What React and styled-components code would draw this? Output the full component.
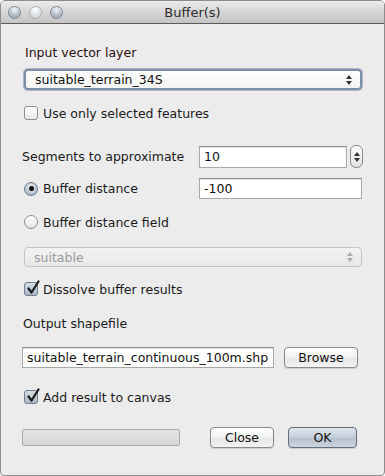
import React from 'react';
import styled, { createGlobalStyle, css } from 'styled-components';

const Global = createGlobalStyle`
  html, body { margin:0; padding:0; background:#ffffff; }
  * { box-sizing:border-box; }
  body { font-family:"DejaVu Sans", "Liberation Sans", sans-serif; font-size:12px; color:#111; }
`

const Window = styled.div`
  width:385px;
  height:476px;
  border:1px solid #8c8c8c;
  border-radius:5px 5px 4px 4px;
  background:#ececec;
  display:flex;
  flex-direction:column;
  overflow:hidden;
`
const TitleBar = styled.div`
  height:23px;
  flex:none;
  display:flex;
  align-items:center;
  position:relative;
  background:linear-gradient(#ebebeb, #d2d2d2 60%, #c4c4c4);
  border-bottom:1px solid #5a5a5a;
  padding-left:7px;
  gap:8px;
`
const Light = styled.span`
  width:13px;
  height:13px;
  border-radius:50%;
  border:1px solid #7d8894;
  background:radial-gradient(circle at 50% 30%, #f2f5f8 0%, #b9c3cd 45%, #8f9ba7 100%);
  box-shadow:inset 0 1px 1px rgba(255,255,255,0.7);
  ${p => p.$faded && css`
    border-color:#a9afb5;
    background:radial-gradient(circle at 50% 30%, #ffffff 0%, #dfe3e7 50%, #c3c9cf 100%);
  `}
`
const Title = styled.div`
  position:absolute;
  left:0;
  right:0;
  top:0;
  line-height:23px;
  text-align:center;
  font-size:13px;
  color:#2b2b2b;
  pointer-events:none;
`
const Content = styled.div`
  display:flex;
  flex-direction:column;
  padding:0 22px 0 21px;
`
const Row = styled.div`
  display:flex;
  align-items:center;
  height:${p => p.$h}px;
  margin-top:${p => p.$mt}px;
  padding-left:${p => p.$pl || 0}px;
`
const Label = styled.span`
  font-size:12.5px;
  color:#1a1a1a;
  white-space:nowrap;
`
const SelectBox = styled.div`
  flex:1;
  height:100%;
  display:flex;
  align-items:center;
  justify-content:space-between;
  padding:0 8px 0 9px;
  border-radius:4px;
  font-size:12.5px;
  background:linear-gradient(#ffffff, #f4f4f4);
  border:1px solid #9a9a9a;
  box-shadow:0 1px 1px rgba(0,0,0,0.12);
  ${p => p.$focus && css`
    border:2px solid #7c8ea3;
    box-shadow:0 0 0 1px #a9b7c8;
  `}
  ${p => p.$disabled && css`
    color:#9a9a9a;
    background:linear-gradient(#f2f2f2, #e9e9e9);
    border-color:#c4c4c4;
    box-shadow:none;
  `}
`
const Arrows = styled.span`
  display:flex;
  flex-direction:column;
  gap:2px;
  &::before, &::after {
    content:'';
    border-left:3px solid transparent;
    border-right:3px solid transparent;
  }
  &::before { border-bottom:4px solid ${p => p.$color}; }
  &::after { border-top:4px solid ${p => p.$color}; }
`
const Check = styled.span`
  width:14px;
  height:14px;
  flex:none;
  border:1px solid #8e8e8e;
  border-radius:3px;
  background:linear-gradient(#ffffff, #e6e6e6);
  margin-right:5px;
  position:relative;
  ${p => p.$checked && css`
    border-color:#6f7d8c;
    background:linear-gradient(#d5dde6, #aab7c6);
  `}
  svg { position:absolute; left:1px; top:-3px; }
`
const Radio = styled.span`
  width:14px;
  height:14px;
  flex:none;
  border-radius:50%;
  border:1px solid #8e8e8e;
  background:linear-gradient(#ffffff, #e4e4e4);
  margin-right:5px;
  display:flex;
  align-items:center;
  justify-content:center;
  ${p => p.$checked && css`
    border-color:#6a7786;
    background:radial-gradient(circle at 50% 35%, #eef2f6, #b2bfcd 70%, #98a6b6);
    &::after {
      content:'';
      width:5px;
      height:5px;
      border-radius:50%;
      background:#111;
    }
  `}
`
const FieldGrid = styled.div`
  display:grid;
  grid-template-columns:177px 1fr auto;
  align-items:center;
  height:${p => p.$h}px;
  margin-top:${p => p.$mt}px;
`
const TextInput = styled.div`
  height:${p => p.$h}px;
  width:${p => (p.$w ? `${p.$w}px` : 'auto')};
  grid-column:${p => p.$span ? '2 / 4' : 'auto'};
  background:#ffffff;
  border:1px solid #a8a8a8;
  border-top-color:#8e8e8e;
  box-shadow:inset 0 1px 1px rgba(0,0,0,0.12);
  display:flex;
  align-items:center;
  padding-left:4px;
  font-size:12.5px;
  white-space:nowrap;
  overflow:hidden;
`
const Spinner = styled.div`
  width:13px;
  height:23px;
  margin-left:3px;
  border:1px solid #8a8a8a;
  border-radius:6px;
  background:linear-gradient(#ffffff, #e2e2e2);
  display:flex;
  align-items:center;
  justify-content:center;
`
const Button = styled.button`
  height:21px;
  width:${p => p.$w}px;
  margin-left:${p => p.$ml}px;
  font-family:inherit;
  font-size:12.5px;
  color:#111;
  border-radius:4px;
  border:1px solid #8a8a8a;
  background:linear-gradient(#ffffff, #f1f1f1 50%, #e4e4e4 51%, #f3f3f3);
  box-shadow:0 1px 1px rgba(0,0,0,0.15);
  padding:0;
  ${p => p.$primary && css`
    border-color:#5f6d7d;
    background:linear-gradient(#dfe5ec, #c4ceda 50%, #b3bfcd 51%, #cbd5e0);
  `}
`
const Progress = styled.div`
  width:158px;
  height:17px;
  border:1px solid #a9a9a9;
  border-radius:2px;
  background:linear-gradient(#e4e4e4, #d6d6d6);
`

const Tick = () => (
  <svg width="14" height="15" viewBox="0 0 14 15">
    <path d="M2.5 8.5 L5.5 12.5 L12.5 1.5" fill="none" stroke="#1b1b1b" strokeWidth="2.2" strokeLinecap="round" strokeLinejoin="round" />
  </svg>
)

const CheckRow = ({ mt, checked, children }) => (
  <Row $h={16} $mt={mt} $pl={2}>
    <Check $checked={checked}>{checked && <Tick />}</Check>
    <Label>{children}</Label>
  </Row>
)

const App = () => {
  return (
    <>
      <Global />
      <Window>
        <TitleBar>
          <Light />
          <Light $faded />
          <Light />
          <Title>Buffer(s)</Title>
        </TitleBar>
        <Content>
          <Row $h={16} $mt={20} $pl={3}>
            <Label style={{ color: '#2a0f0f' }}>Input vector layer</Label>
          </Row>
          <Row $h={21} $mt={9} $pl={2}>
            <SelectBox $focus>
              <span>suitable_terrain_34S</span>
              <Arrows $color="#333" />
            </SelectBox>
          </Row>
          <CheckRow mt={15}>Use only selected features</CheckRow>

          <FieldGrid $h={23} $mt={24}>
            <Label>Segments to approximate</Label>
            <TextInput $h={22} $w={148}>10</TextInput>
            <Spinner><Arrows $color="#333" /></Spinner>
          </FieldGrid>
          <FieldGrid $h={21} $mt={10}>
            <Row $h={16} $mt={0} $pl={2}>
              <Radio $checked />
              <Label>Buffer distance</Label>
            </Row>
            <TextInput $h={21} $span>-100</TextInput>
          </FieldGrid>
          <Row $h={16} $mt={15} $pl={2}>
            <Radio />
            <Label>Buffer distance field</Label>
          </Row>
          <Row $h={20} $mt={17} $pl={2}>
            <SelectBox $disabled>
              <span>suitable</span>
              <Arrows $color="#aaa" />
            </SelectBox>
          </Row>
          <CheckRow mt={14} checked>Dissolve buffer results</CheckRow>
          <Row $h={16} $mt={18} $pl={1}>
            <Label>Output shapefile</Label>
          </Row>
          <Row $h={21} $mt={16}>
            <TextInput $h={21} $w={252}>suitable_terrain_continuous_100m.shp</TextInput>
            <Button $w={74} $ml={10}>Browse</Button>
          </Row>
          <CheckRow mt={21} checked>Add result to canvas</CheckRow>
          <Row $h={21} $mt={22}>
            <Progress />
            <Button $w={64} $ml={30}>Close</Button>
            <Button $w={69} $ml={14} $primary>OK</Button>
          </Row>
        </Content>
      </Window>
    </>
  );
}

export default App
